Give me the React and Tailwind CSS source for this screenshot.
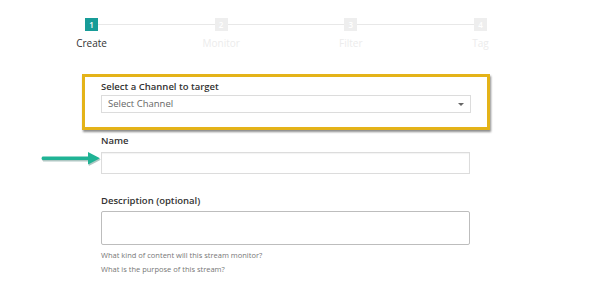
import React from 'react';

const steps = [
  { n: 1, label: 'Create', active: true },
  { n: 2, label: 'Monitor' },
  { n: 3, label: 'Filter' },
  { n: 4, label: 'Tag' },
];

function Stepper() {
  return (
    <div className="relative ml-[85px] w-[402px] pt-[18px]">
      {/* connector line */}
      <div className="absolute left-[7px] right-[7px] top-[24px] h-px bg-[#e8e8e8]" />
      <div className="relative flex justify-between">
        {steps.map((s) => (
          <div key={s.n} className="flex w-[13px] flex-col items-center">
            <div
              className={
                s.active
                  ? 'flex h-[13px] w-[13px] items-center justify-center bg-[#179c98] text-[8px] font-semibold text-white'
                  : 'flex h-[13px] w-[13px] items-center justify-center bg-[#eeeeee] text-[8px] font-semibold text-white'
              }
            >
              {s.n}
            </div>
            <span
              className={
                s.active
                  ? 'mt-[5px] whitespace-nowrap text-[10px] text-[#333]'
                  : 'mt-[5px] whitespace-nowrap text-[10px] text-[#ececec]'
              }
            >
              {s.label}
            </span>
          </div>
        ))}
      </div>
    </div>
  );
}

function Arrow() {
  return (
    <svg className="absolute left-[39px] top-[151px]" width="64" height="16" viewBox="0 0 64 16">
      <path d="M3.5 6 H49 V1.5 L61 7.8 L49 14 V9.6 H3.5 Q1.5 7.8 3.5 6 Z" fill="#1b5e52" opacity="0.35" transform="translate(0.8,0.9)" />
      <path d="M3.5 5.4 H49 V1 L61 7.2 L49 13.4 V9 H3.5 Q1.5 7.2 3.5 5.4 Z" fill="#20b395" />
    </svg>
  );
}

export default function App() {
  return (
    <div className="relative h-[308px] w-[592px] overflow-hidden bg-white" style={{ fontFamily: '"Open Sans", "Noto Sans", sans-serif' }}>
      <Stepper />

      {/* Channel select, highlighted */}
      <div className="ml-[82px] mt-[23px] h-[56px] w-[408px] border-[3px] border-[#e4b318] px-[16px] pt-[3px] shadow-[1px_2px_2px_rgba(0,0,0,0.45)]">
        <div className="text-[9.5px] font-semibold leading-[13px] text-[#333]">Select a Channel to target</div>
        <div className="mt-[2px] flex h-[18px] w-[370px] items-center justify-between border border-[#dcdcdc] pl-[6px] pr-[6px]">
          <span className="text-[9.5px] text-[#666]">Select Channel</span>
          <span className="h-0 w-0 border-x-[3px] border-t-[3px] border-x-transparent border-t-[#666]" />
        </div>
      </div>

      <Arrow />

      <div className="ml-[101px] mt-[4px] w-[370px]">
        <div className="text-[9.5px] font-semibold leading-[13px] text-[#333]">Name</div>
        <div className="mt-[5px] h-[22px] w-[369px] border border-[#dcdcdc] shadow-[inset_0_1px_1px_rgba(0,0,0,0.05)]" />

        <div className="mt-[20px] text-[9.5px] font-semibold leading-[13px] text-[#333]">Description (optional)</div>
        <div className="mt-[4px] h-[34px] w-[369px] rounded-[2px] border border-[#bdbdbd]" />

        <div className="mt-[5px] text-[7.5px] leading-[10px] text-[#777]">What kind of content will this stream monitor?</div>
        <div className="mt-[4px] text-[7.5px] leading-[10px] text-[#777]">What is the purpose of this stream?</div>
      </div>
    </div>
  );
}
